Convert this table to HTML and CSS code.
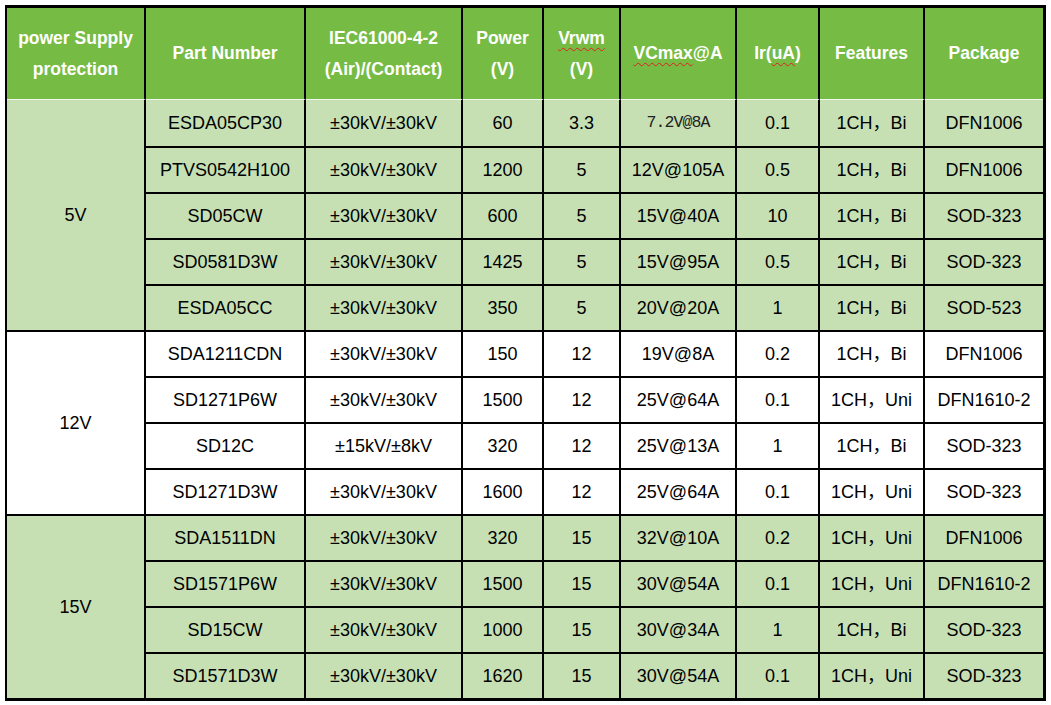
FILE: index.html
```html
<!DOCTYPE html>
<html>
<head>
<meta charset="utf-8">
<link rel="stylesheet" href="styles.css">
</head>
<body>
<div class="wrap">
<table class="spec">
  <thead>
    <tr class="head">
      <th class="c1">power Supply<br>protection</th>
      <th class="c2">Part Number</th>
      <th class="c3">IEC61000-4-2<br>(Air)/(Contact)</th>
      <th class="c4">Power<br>(V)</th>
      <th class="c5"><span class="sp">Vrwm</span><br>(V)</th>
      <th class="c6"><span class="sp">VCmax</span>@A</th>
      <th class="c7">Ir(<span class="sp">uA</span>)</th>
      <th class="c8">Features</th>
      <th class="c9">Package</th>
    </tr>
  </thead>
  <tbody class="g">
    <tr class="row first"><td rowspan="5" class="grp">5V</td><td>ESDA05CP30</td><td>±30kV/±30kV</td><td>60</td><td>3.3</td><td class="mono">7.2V@8A</td><td>0.1</td><td>1CH<span class="cm">，</span>Bi</td><td>DFN1006</td></tr>
    <tr class="row"><td>PTVS0542H100</td><td>±30kV/±30kV</td><td>1200</td><td>5</td><td>12V@105A</td><td>0.5</td><td>1CH<span class="cm">，</span>Bi</td><td>DFN1006</td></tr>
    <tr class="row"><td>SD05CW</td><td>±30kV/±30kV</td><td>600</td><td>5</td><td>15V@40A</td><td>10</td><td>1CH<span class="cm">，</span>Bi</td><td>SOD-323</td></tr>
    <tr class="row"><td>SD0581D3W</td><td>±30kV/±30kV</td><td>1425</td><td>5</td><td>15V@95A</td><td>0.5</td><td>1CH<span class="cm">，</span>Bi</td><td>SOD-323</td></tr>
    <tr class="row"><td>ESDA05CC</td><td>±30kV/±30kV</td><td>350</td><td>5</td><td>20V@20A</td><td>1</td><td>1CH<span class="cm">，</span>Bi</td><td>SOD-523</td></tr>
  </tbody>
  <tbody class="w">
    <tr class="row"><td rowspan="4" class="grp">12V</td><td>SDA1211CDN</td><td>±30kV/±30kV</td><td>150</td><td>12</td><td>19V@8A</td><td>0.2</td><td>1CH<span class="cm">，</span>Bi</td><td>DFN1006</td></tr>
    <tr class="row"><td>SD1271P6W</td><td>±30kV/±30kV</td><td>1500</td><td>12</td><td>25V@64A</td><td>0.1</td><td>1CH<span class="cm">，</span>Uni</td><td>DFN1610-2</td></tr>
    <tr class="row"><td>SD12C</td><td>±15kV/±8kV</td><td>320</td><td>12</td><td>25V@13A</td><td>1</td><td>1CH<span class="cm">，</span>Bi</td><td>SOD-323</td></tr>
    <tr class="row"><td>SD1271D3W</td><td>±30kV/±30kV</td><td>1600</td><td>12</td><td>25V@64A</td><td>0.1</td><td>1CH<span class="cm">，</span>Uni</td><td>SOD-323</td></tr>
  </tbody>
  <tbody class="g">
    <tr class="row"><td rowspan="4" class="grp">15V</td><td>SDA1511DN</td><td>±30kV/±30kV</td><td>320</td><td>15</td><td>32V@10A</td><td>0.2</td><td>1CH<span class="cm">，</span>Uni</td><td>DFN1006</td></tr>
    <tr class="row"><td>SD1571P6W</td><td>±30kV/±30kV</td><td>1500</td><td>15</td><td>30V@54A</td><td>0.1</td><td>1CH<span class="cm">，</span>Uni</td><td>DFN1610-2</td></tr>
    <tr class="row"><td>SD15CW</td><td>±30kV/±30kV</td><td>1000</td><td>15</td><td>30V@34A</td><td>1</td><td>1CH<span class="cm">，</span>Bi</td><td>SOD-323</td></tr>
    <tr class="row"><td>SD1571D3W</td><td>±30kV/±30kV</td><td>1620</td><td>15</td><td>30V@54A</td><td>0.1</td><td>1CH<span class="cm">，</span>Uni</td><td>SOD-323</td></tr>
  </tbody>
</table>
</div>
</body>
</html>
```
FILE: styles.css
```css
html, body {
  margin: 0;
  padding: 0;
  background: #ffffff;
}
.wrap {
  padding: 5px 0 0 5px;
}
.spec {
  border-collapse: separate;
  border-spacing: 0;
  table-layout: fixed;
  width: 1041px;
  border-style: solid;
  border-color: #000;
  border-width: 3px 3px 3px 2px;
  font-family: "Liberation Sans", Arial, "Noto Sans CJK SC", sans-serif;
  font-size: 18px;
  color: #000;
}
.spec th, .spec td {
  box-sizing: border-box;
  padding: 0;
  text-align: center;
  vertical-align: middle;
  border-right: 2px solid #000;
  white-space: nowrap;
}
.spec th:last-child, .spec td:last-child {
  border-right: 0;
}
.head {
  height: 92px;
}
.spec th {
  background: #76bb43;
  color: #fff;
  font-weight: bold;
  font-size: 17.5px;
  line-height: 31px;
  border-bottom: 1px solid #f2f8ee;
}
.c1 { width: 139px; }
.c2 { width: 160px; }
.c3 { width: 157px; }
.c4 { width: 81px; }
.c5 { width: 77px; }
.c6 { width: 116px; }
.c7 { width: 83px; }
.c8 { width: 105px; }
.c9 { width: 118px; }
.sp {
  text-decoration: underline wavy #e02020;
  text-decoration-thickness: 1px;
  text-underline-offset: 3px;
  text-decoration-skip-ink: none;
}
.row {
  height: 46px;
}
.row td {
  border-top: 2px solid #000;
  line-height: 20px;
}
.row.first td {
  border-top: 0;
}
.g td {
  background: #c6e0b4;
}
.w td {
  background: #ffffff;
}
.cm {
  font-family: "Noto Sans CJK SC", sans-serif;
  line-height: 0;
}
.mono {
  font-family: "Liberation Mono", "Courier New", monospace;
  font-size: 16.5px;
  letter-spacing: -0.9px;
  color: #222;
}
```
